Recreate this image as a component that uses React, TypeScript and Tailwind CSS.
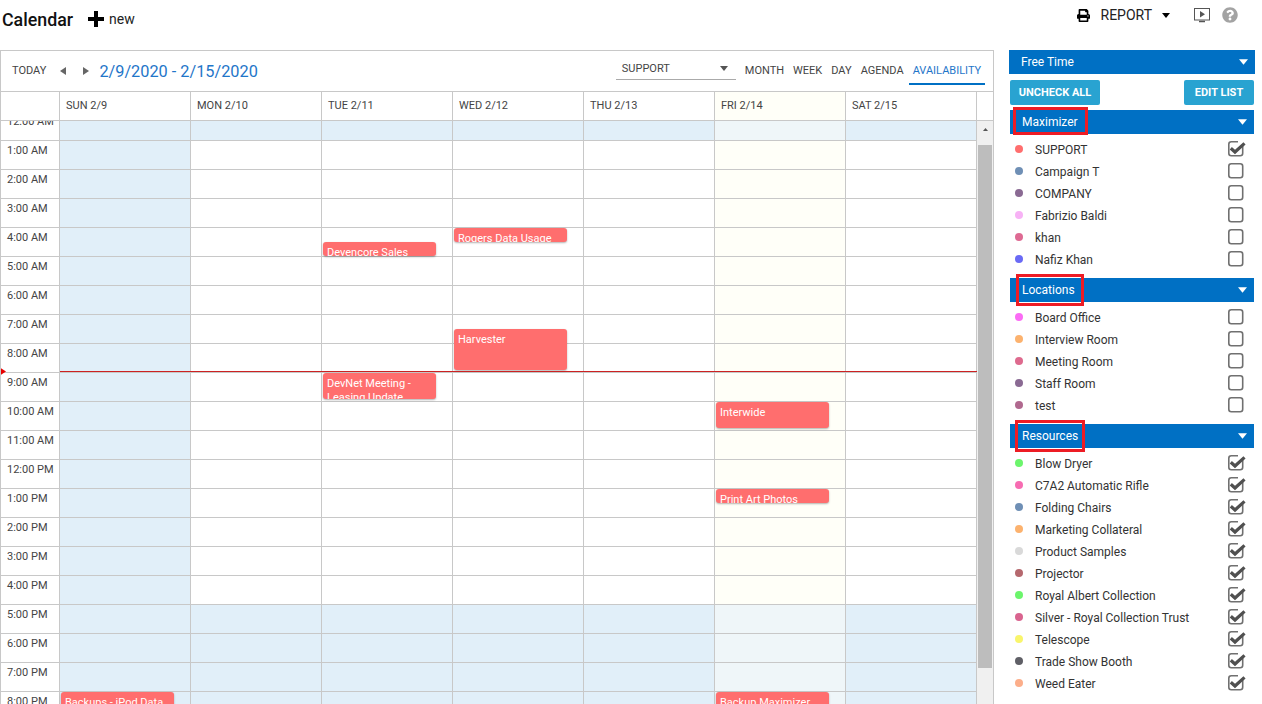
import { FaPrint, FaQuestionCircle } from 'react-icons/fa';

const days = ['SUN 2/9', 'MON 2/10', 'TUE 2/11', 'WED 2/12', 'THU 2/13', 'FRI 2/14', 'SAT 2/15'];

const hours = [
  '12:00 AM', '1:00 AM', '2:00 AM', '3:00 AM', '4:00 AM', '5:00 AM', '6:00 AM',
  '7:00 AM', '8:00 AM', '9:00 AM', '10:00 AM', '11:00 AM', '12:00 PM', '1:00 PM',
  '2:00 PM', '3:00 PM', '4:00 PM', '5:00 PM', '6:00 PM', '7:00 PM', '8:00 PM',
];

type CalEvent = { day: number; hour: number; title: string; cls: string };

const events: CalEvent[] = [
  { day: 2, hour: 4, title: 'Devencore Sales', cls: 'top-[14px] h-[14px]' },
  { day: 3, hour: 4, title: 'Rogers Data Usage', cls: 'top-0 h-[14px]' },
  { day: 3, hour: 7, title: 'Harvester', cls: 'top-[14px] h-[41px]' },
  { day: 2, hour: 9, title: 'DevNet Meeting - Leasing Update', cls: 'top-0 h-[26px]' },
  { day: 5, hour: 10, title: 'Interwide', cls: 'top-0 h-[26px]' },
  { day: 5, hour: 13, title: 'Print Art Photos', cls: 'top-0 h-[14px]' },
  { day: 0, hour: 20, title: 'Backups - iPod Data', cls: 'top-0 h-[40px]' },
  { day: 5, hour: 20, title: 'Backup Maximizer', cls: 'top-0 h-[40px]' },
];

const maximizer = [
  { name: 'SUPPORT', color: 'bg-[#ff6e6e]', on: true },
  { name: 'Campaign T', color: 'bg-[#6f8fb5]', on: false },
  { name: 'COMPANY', color: 'bg-[#8a6a93]', on: false },
  { name: 'Fabrizio Baldi', color: 'bg-[#f7b2f5]', on: false },
  { name: 'khan', color: 'bg-[#de6a93]', on: false },
  { name: 'Nafiz Khan', color: 'bg-[#6a6af5]', on: false },
];

const locations = [
  { name: 'Board Office', color: 'bg-[#fb6cf5]', on: false },
  { name: 'Interview Room', color: 'bg-[#fcb26e]', on: false },
  { name: 'Meeting Room', color: 'bg-[#de6a8e]', on: false },
  { name: 'Staff Room', color: 'bg-[#8a6a93]', on: false },
  { name: 'test', color: 'bg-[#b0698f]', on: false },
];

const resources = [
  { name: 'Blow Dryer', color: 'bg-[#6cf56c]', on: true },
  { name: 'C7A2 Automatic Rifle', color: 'bg-[#f76cb2]', on: true },
  { name: 'Folding Chairs', color: 'bg-[#6f8fb5]', on: true },
  { name: 'Marketing Collateral', color: 'bg-[#fcb26e]', on: true },
  { name: 'Product Samples', color: 'bg-[#d9d9d9]', on: true },
  { name: 'Projector', color: 'bg-[#b5686e]', on: true },
  { name: 'Royal Albert Collection', color: 'bg-[#6cf56c]', on: true },
  { name: 'Silver - Royal Collection Trust', color: 'bg-[#d9648f]', on: true },
  { name: 'Telescope', color: 'bg-[#f9f56c]', on: true },
  { name: 'Trade Show Booth', color: 'bg-[#5f5f66]', on: true },
  { name: 'Weed Eater', color: 'bg-[#fcae8a]', on: true },
];

function cellColor(day: number, hour: number) {
  const off = hour === 0 || hour >= 17;
  if (day === 5) return off ? 'bg-[#eff6f9]' : 'bg-[#fffff8]';
  if (off || day === 0) return 'bg-[#e1eff9]';
  return 'bg-white';
}

function Caret({ className }: { className: string }) {
  return (
    <svg className={className} viewBox="0 0 10 6">
      <path d="M0 0h10L5 6z" fill="currentColor" />
    </svg>
  );
}

function SideArrow({ left, className }: { left?: boolean; className: string }) {
  return (
    <svg className={className} viewBox="0 0 6 8">
      <path d={left ? 'M6 0v8L0 4z' : 'M0 0v8l6-4z'} fill="currentColor" />
    </svg>
  );
}

function Checkbox({ on }: { on: boolean }) {
  return (
    <svg className="w-[16px] h-[16px] -mt-[2px] overflow-visible" viewBox="0 0 16 16">
      <rect x="0.8" y="0.8" width="13.9" height="13.9" rx="2.5" fill="white" stroke="#707070" strokeWidth="1.6" />
      {on && (
        <>
          <rect x="10" y="-1" width="6" height="6" fill="white" />
          <path d="M2.8 7.2L7 11L16.5 2.4" fill="none" stroke="#505050" strokeWidth="3.2" />
        </>
      )}
    </svg>
  );
}

function Section({
  title,
  items,
  boxCls,
}: {
  title: string;
  items: { name: string; color: string; on: boolean }[];
  boxCls: string;
}) {
  return (
    <div>
      <div className="relative h-[24px] mx-px bg-[#0070c4] flex items-center justify-between pl-[12px] pr-[7px] text-white text-[12px]">
        <span>{title}</span>
        <Caret className="w-[9px] h-[6px] text-white" />
        <div className={`absolute border-[3px] border-[#ed1c24] ${boxCls}`} />
      </div>
      <div className="pt-[5px] pb-[7px]">
        {items.map((item) => (
          <div key={item.name} className="h-[22px] flex items-center pl-[6px] pr-[11px] text-[12px] text-[#333]">
            <span className={`w-[8px] h-[8px] rounded-full -mt-[3px] ${item.color}`} />
            <span className="ml-[12px] flex-1">{item.name}</span>
            <Checkbox on={item.on} />
          </div>
        ))}
      </div>
    </div>
  );
}

export default function App() {
  return (
    <div className="h-[704px] w-[1262px] overflow-hidden bg-white font-['Roboto',sans-serif]">
      <div className="h-[50px] flex justify-between">
        <div className="flex items-start pl-[2px] pt-[10px]">
          <span className="text-[17.8px] leading-[20px] font-medium text-[#111]">Calendar</span>
          <svg className="ml-[15px] mt-[1px] w-[16px] h-[16px]" viewBox="0 0 16 16">
            <path d="M6 0h4v6h6v4h-6v6H6v-6H0V6h6z" fill="#000" />
          </svg>
          <span className="ml-[5px] text-[14px] leading-[18px] text-[#222]">new</span>
        </div>
        <div className="flex items-start pt-[7px] pr-[24px]">
          <FaPrint className="mt-[2px] w-[13px] h-[13px] text-black" />
          <span className="ml-[11px] text-[14px] leading-[17px] text-[#222]">REPORT</span>
          <Caret className="ml-[10px] mt-[6px] w-[8px] h-[5px] text-black" />
          <svg className="ml-[24px] mt-px w-[16px] h-[15px]" viewBox="0 0 16 15">
            <rect x="0.5" y="0.5" width="15" height="11.5" fill="none" stroke="#555" />
            <path d="M6 3l5 3.2-5 3.2z" fill="#555" />
            <path d="M5 13.5h6" stroke="#555" strokeWidth="1.5" />
          </svg>
          <FaQuestionCircle className="ml-[12px] w-[16px] h-[16px] text-[#a3a3a3]" />
        </div>
      </div>

      <div className="flex">
        <div className="w-[994px] h-[654px] border border-[#c8c8c8] border-b-0 overflow-hidden">
          <div className="h-[41px] flex items-start border-b border-[#c8c8c8]">
            <span className="ml-[11px] mt-[13px] text-[11px] leading-[14px] text-[#444]">TODAY</span>
            <SideArrow left className="ml-[14px] mt-[16px] w-[6px] h-[8px] text-[#666]" />
            <SideArrow className="ml-[17px] mt-[16px] w-[6px] h-[8px] text-[#666]" />
            <span className="ml-[10px] mt-[11px] text-[16.3px] leading-[20px] text-[#1f76c9]">2/9/2020 - 2/15/2020</span>
            <div className="ml-[358px] mt-[6px] w-[120px] h-[23px] border-b border-[#aaa] flex justify-between pl-[6px] pr-[8px] text-[11px] leading-[11px] text-[#444]">
              <span className="pt-[6px]">SUPPORT</span>
              <Caret className="mt-[9px] w-[8px] h-[5px] text-[#555]" />
            </div>
            <div className="ml-[5px] flex text-[11px] leading-[14px] text-[#444]">
              <span className="px-[4px] pt-[13px]">MONTH</span>
              <span className="ml-[1px] px-[4px] pt-[13px]">WEEK</span>
              <span className="ml-[1px] px-[4px] pt-[13px]">DAY</span>
              <span className="ml-[1px] px-[4px] pt-[13px]">AGENDA</span>
              <span className="ml-[1px] h-[34px] px-[4px] pt-[13px] text-[#1f76c9] border-b-2 border-[#0070c4]">AVAILABILITY</span>
            </div>
          </div>

          <div className="flex h-[29px] border-b border-[#c8c8c8]">
            <div className="w-[59px] border-r border-[#c8c8c8]" />
            {days.map((d, i) => (
              <div
                key={d}
                className={`w-[131px] border-r border-[#c8c8c8] pl-[6px] text-[11px] leading-[28px] text-[#444] ${i === 5 ? 'bg-[#fffff8]' : ''}`}
              >
                {d}
              </div>
            ))}
          </div>

          <div className="flex h-[584px] overflow-hidden">
            <div className="relative w-[976px] overflow-hidden">
              <div className="-mt-[9px]">
                {hours.map((label, h) => (
                  <div key={label} className="flex h-[29px] border-b border-[#c8c8c8]">
                    <div className="w-[59px] border-r border-[#c8c8c8] pl-[6px] pt-[3px] text-[11px] leading-[14px] text-[#444]">
                      {label}
                    </div>
                    {days.map((d, i) => {
                      const ev = events.find((e) => e.day === i && e.hour === h);
                      return (
                        <div key={d} className={`relative w-[131px] border-r border-[#c8c8c8] ${cellColor(i, h)}`}>
                          {ev && (
                            <div
                              className={`absolute z-10 left-[1px] w-[113px] overflow-hidden rounded-[3px] bg-[#ff6e6e] px-[4px] pt-[4px] text-[11px] leading-[14px] text-white shadow-[0_1px_2px_rgba(0,0,0,0.3)] ${ev.cls}`}
                            >
                              {ev.title}
                            </div>
                          )}
                        </div>
                      );
                    })}
                  </div>
                ))}
              </div>
              <div className="absolute left-[59px] right-0 top-[250px] h-[1px] bg-[#cc2222] z-20" />
              <SideArrow className="absolute left-0 top-[246px] w-[5px] h-[9px] text-[#e80000] z-20" />
            </div>
            <div className="w-[16px] bg-[#f0f0f0] flex flex-col items-center">
              <Caret className="mt-[7px] w-[5px] h-[3px] rotate-180 text-[#555]" />
              <div className="mt-[14px] w-[14px] h-[523px] bg-[#bdbdbd]" />
            </div>
          </div>
        </div>

        <div className="ml-[15px] w-[246px]">
          <div className="h-[24px] bg-[#0070c4] flex items-center justify-between pl-[12px] pr-[7px] text-white text-[12px]">
            <span>Free Time</span>
            <Caret className="w-[9px] h-[6px] text-white" />
          </div>
          <div className="flex justify-between h-[36px] pt-[6px] mx-px">
            <button className="w-[90px] h-[25px] pt-px rounded-[2px] bg-[#29a3d1] text-white text-[11px] font-bold">UNCHECK ALL</button>
            <button className="w-[70px] h-[25px] pt-px rounded-[2px] bg-[#29a3d1] text-white text-[11px] font-bold">EDIT LIST</button>
          </div>
          <Section title="Maximizer" items={maximizer} boxCls="left-[3px] -top-[3px] w-[75px] h-[28px]" />
          <Section title="Locations" items={locations} boxCls="left-[6px] -top-[4px] w-[68px] h-[32px]" />
          <Section title="Resources" items={resources} boxCls="left-[5px] -top-[4px] w-[70px] h-[32px]" />
        </div>
      </div>
    </div>
  );
}
